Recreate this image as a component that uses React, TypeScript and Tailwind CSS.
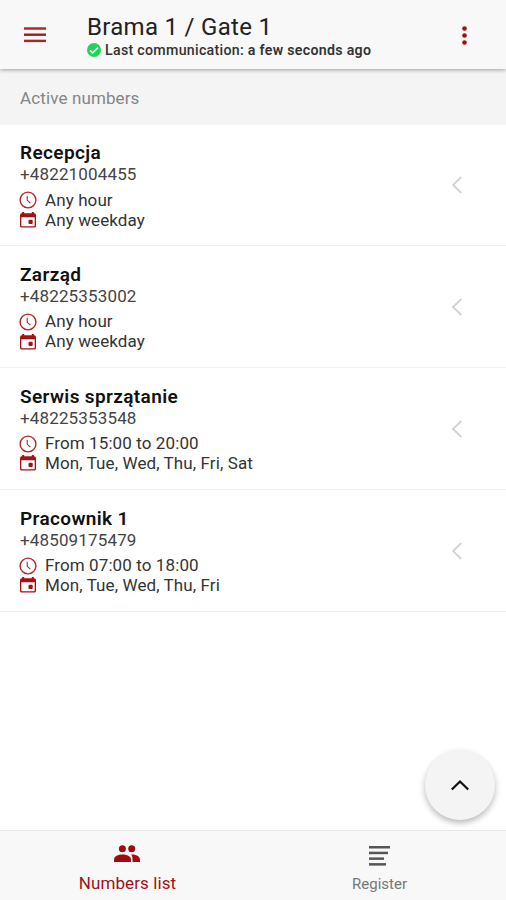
type Entry = {
  name: string
  phone: string
  hours: string
  days: string
}

const entries: Entry[] = [
  { name: 'Recepcja', phone: '+48221004455', hours: 'Any hour', days: 'Any weekday' },
  { name: 'Zarząd', phone: '+48225353002', hours: 'Any hour', days: 'Any weekday' },
  {
    name: 'Serwis sprzątanie',
    phone: '+48225353548',
    hours: 'From 15:00 to 20:00',
    days: 'Mon, Tue, Wed, Thu, Fri, Sat',
  },
  {
    name: 'Pracownik 1',
    phone: '+48509175479',
    hours: 'From 07:00 to 18:00',
    days: 'Mon, Tue, Wed, Thu, Fri',
  },
]

function ClockIcon() {
  return (
    <svg viewBox="0 0 18 18" className="-ml-px h-[18px] w-[18px] shrink-0" fill="none" stroke="#b3262b">
      <circle cx="9" cy="9" r="7.9" strokeWidth="1.4" />
      <path d="M8.2 4.7v4.6l3.2 2.9" strokeWidth="1.1" />
    </svg>
  )
}

function CalendarIcon() {
  return (
    <svg viewBox="0 0 16 16" className="-mt-px h-4 w-4 shrink-0" fill="#a80f14">
      <path
        fillRule="evenodd"
        d="M2.2 0h2v1.2h7.6V0h2v1.2A2 2 0 0 1 16 3.2v10.7a1.7 1.7 0 0 1-1.7 1.7H1.7A1.7 1.7 0 0 1 0 13.9V3.2a2 2 0 0 1 2.2-2zM1.3 5.3v8.3q0 .7.7.7h12q.7 0 .7-.7V5.3z"
      />
      <rect x="8.5" y="7.7" width="4.2" height="4.2" rx="1" />
    </svg>
  )
}

function NumberRow({ entry }: { entry: Entry }) {
  return (
    <li className="flex h-[121.8px] items-center justify-between border-b border-[#f1f1f1] pt-0.5 pl-5 pr-[43px]">
      <div>
        <h2 className="pt-px text-[19px] leading-[22px] font-semibold tracking-[0.37px] text-[#111]">{entry.name}</h2>
        <p className="text-[17px] leading-5 tracking-[0.15px] text-[#444]">{entry.phone}</p>
        <div className="mt-[6px] flex h-5 items-center gap-2 text-[17px] tracking-[0.1px] text-[#333]">
          <ClockIcon />
          <span>{entry.hours}</span>
        </div>
        <div className="flex h-5 items-center gap-[9px] text-[17px] tracking-[0.1px] text-[#333]">
          <CalendarIcon />
          <span>{entry.days}</span>
        </div>
      </div>
      <svg viewBox="0 0 12 18" className="-mt-px h-[18px] w-3" fill="none" stroke="#d2d2d2" strokeWidth="1.8">
        <path d="M10.3 1 2 9l8.3 8" />
      </svg>
    </li>
  )
}

export default function App() {
  return (
    <div className="relative flex h-[900px] w-[506px] flex-col overflow-hidden bg-white font-['Roboto',sans-serif]">
      <header className="z-10 flex h-[69px] shrink-0 items-center bg-[#f8f8f8] pr-[39px] pl-6 shadow-[0_1px_4px_rgba(0,0,0,0.35)]">
        <button aria-label="Menu" className="pt-px">
          <svg viewBox="0 0 22 16" className="h-4 w-[22px]">
            <rect y="0.3" width="22" height="2.4" fill="#a8262a" />
            <rect y="6.5" width="22" height="2.4" fill="#a3181b" />
            <rect y="12.7" width="22" height="2.4" fill="#a8262a" />
          </svg>
        </button>
        <div className="ml-[41px] flex-1 pt-[5px]">
          <h1 className="text-[24px] leading-[27px] tracking-[0.3px] text-[#222]">Brama 1 / Gate 1</h1>
          <div className="flex h-5 items-center gap-1 text-[14.2px] font-medium tracking-[0.29px] text-[#333]">
            <svg viewBox="0 0 14 14" className="-mt-[2px] h-[14px] w-[14px]">
              <circle cx="7" cy="7" r="7" fill="#20d65a" />
              <path d="m3 7.2 2.7 2.7L11 4.4" fill="none" stroke="#fff" strokeWidth="1.5" />
            </svg>
            <p className="pt-px">
              Last communication: <span className="font-semibold">a few seconds ago</span>
            </p>
          </div>
        </div>
        <button aria-label="More" className="pt-px">
          <svg viewBox="0 0 5 19" className="h-[19px] w-[5px]" fill="#a00d12">
            <circle cx="2.5" cy="2.5" r="2.3" />
            <circle cx="2.5" cy="9.5" r="2.3" />
            <circle cx="2.5" cy="16.5" r="2.3" />
          </svg>
        </button>
      </header>

      <main className="flex-1">
        <div className="flex h-[55.5px] items-center bg-[#f4f4f4] pt-1 pl-5 text-[17px] tracking-[0.12px] text-[#858585]">
          Active numbers
        </div>
        <ul>
          {entries.map((entry) => (
            <NumberRow key={entry.phone} entry={entry} />
          ))}
        </ul>
      </main>

      <button
        aria-label="Scroll to top"
        className="absolute right-[11px] bottom-[80px] flex h-[70px] w-[70px] items-center justify-center rounded-full bg-[#f4f4f4] shadow-[0_3px_6px_rgba(0,0,0,0.28)]"
      >
        <svg viewBox="0 0 20 12" className="h-3 w-5" fill="none" stroke="#111" strokeWidth="2.3">
          <path d="m1.8 10.5 8.2-8 8.2 8" />
        </svg>
      </button>

      <nav className="grid h-[70px] shrink-0 grid-cols-2 border-t border-[#e8e8e8] bg-[#f8f8f8]">
        <a className="flex flex-col items-center pt-[14px] text-[#9f1016]">
          <svg viewBox="0 0 26 17" className="h-[17px] w-[26px]" fill="#9f0b10">
            <circle cx="8.4" cy="3.8" r="3.5" />
            <circle cx="17.7" cy="3.8" r="3.5" />
            <path d="M0 17v-2.3C0 11 4.3 9.5 8.5 9.5S17 11 17 14.7V17z" />
            <path d="M17.6 9.6c4.4.1 8.4 1.7 8.4 5.1V17h-7.5v-2.3c0-2.2-.3-3.9-1.4-5.1z" />
          </svg>
          <span className="mt-[11px] ml-0.5 text-[17px] leading-5 tracking-[0.1px]">Numbers list</span>
        </a>
        <a className="flex flex-col items-center pt-[15px] text-[#777]">
          <svg viewBox="0 0 21 20" className="h-5 w-[21px]" fill="#555">
            <rect y="0" width="21" height="2.5" />
            <rect y="5.7" width="19" height="2.5" />
            <rect y="11.4" width="15" height="2.5" />
            <rect y="17.1" width="17" height="2.5" />
          </svg>
          <span className="mt-2 text-[15px] leading-5">Register</span>
        </a>
      </nav>
    </div>
  )
}
